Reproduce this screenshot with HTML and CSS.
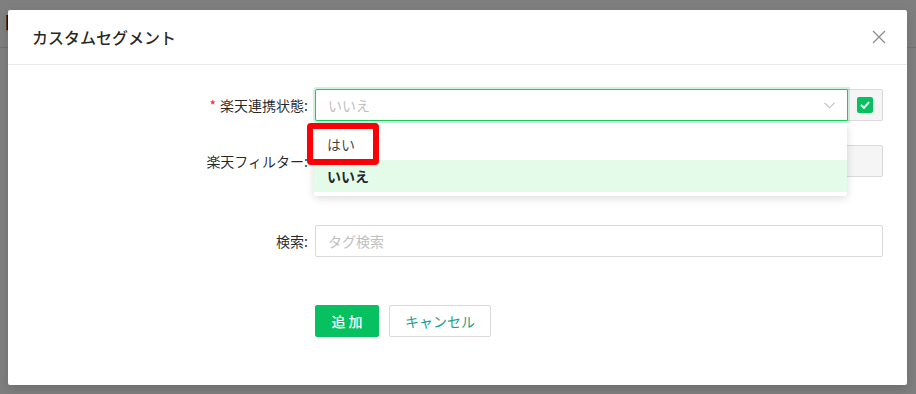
FILE: index.html
```html
<!DOCTYPE html>
<html lang="ja">

<head>
    <meta charset="UTF-8">
    <meta name="viewport" content="width=device-width, initial-scale=1.0">
    <title>カスタムセグメント</title>
    <link rel="stylesheet" href="styles.css">
</head>

<body>
    <div class="page">
        <div class="page-head">
            <span class="page-title">ト</span>
        </div>
    </div>

    <div class="mask">
        <div class="modal">
            <div class="modal-header">
                <div class="modal-title">カスタムセグメント</div>
                <button class="modal-close" type="button">
                    <svg width="14" height="14" viewBox="0 0 14 14">
                        <path d="M1 1 L13 13 M13 1 L1 13" stroke="#8c8c8c" stroke-width="1.3" fill="none" />
                    </svg>
                </button>
            </div>
            <div class="modal-body">
                <form class="form">
                    <div class="form-row">
                        <label class="form-label"><span class="required">*</span>楽天連携状態:</label>
                        <div class="form-control">
                            <div class="select-group">
                                <div class="select is-open">
                                    <span class="select-placeholder">いいえ</span>
                                    <svg class="select-arrow" width="11" height="7" viewBox="0 0 11 7">
                                        <path d="M0.5 0.8 L5.5 5.8 L10.5 0.8" stroke="#bfbfbf" stroke-width="1.1" fill="none" />
                                    </svg>
                                    <ul class="select-menu">
                                        <li>はい</li>
                                        <li class="active">いいえ</li>
                                    </ul>
                                    <div class="hint-box"></div>
                                </div>
                                <div class="addon">
                                    <span class="checkbox">
                                        <svg width="10" height="8" viewBox="0 0 10 8">
                                            <path d="M1 4 L4 6.8 L9 1.2" stroke="#fff" stroke-width="2" fill="none" />
                                        </svg>
                                    </span>
                                </div>
                            </div>
                        </div>
                    </div>

                    <div class="form-row row-wide">
                        <label class="form-label">楽天フィルター:</label>
                        <div class="form-control">
                            <div class="input disabled"></div>
                        </div>
                    </div>

                    <div class="form-row row-wide">
                        <label class="form-label">検索:</label>
                        <div class="form-control">
                            <input class="input" type="text" placeholder="タグ検索">
                        </div>
                    </div>

                    <div class="form-row">
                        <div class="form-label"></div>
                        <div class="form-control buttons">
                            <button class="btn btn-primary" type="button">追 加</button>
                            <button class="btn" type="button">キャンセル</button>
                        </div>
                    </div>
                </form>
            </div>
        </div>
    </div>
</body>

</html>
```

FILE: styles.css
```css
* {
    margin: 0;
    padding: 0;
    box-sizing: border-box;
}

body {
    width: 916px;
    height: 394px;
    overflow: hidden;
    background-color: #fff;
    font-family: "Noto Sans CJK JP", "Noto Sans", sans-serif;
    font-size: 14px;
    color: rgba(0, 0, 0, 0.85);
}

/* page behind the dialog */
.page {
    height: 100%;
}

.page-head {
    height: 48px;
    padding-top: 8px;
    border-bottom: 1px solid #e0e0e0;
}

.page-title {
    font-size: 19px;
    color: #222;
}

.mask {
    position: absolute;
    top: 0;
    left: 0;
    width: 100%;
    height: 100%;
    background-color: rgba(0, 0, 0, 0.5);
}

.modal {
    width: 899px;
    height: 375px;
    margin: 10px 0 0 8px;
    background-color: #fff;
    border-radius: 2px;
    box-shadow: 0 4px 12px rgba(0, 0, 0, 0.15);
}

.modal-header {
    display: flex;
    align-items: center;
    justify-content: space-between;
    padding: 16px 24px;
    border-bottom: 1px solid #e8e8e8;
}

.modal-title {
    font-size: 16px;
    font-weight: 500;
    line-height: 22px;
    color: rgba(0, 0, 0, 0.85);
}

.modal-close {
    display: flex;
    width: 14px;
    height: 14px;
    margin-right: -3px;
    border: none;
    background: none;
    cursor: pointer;
}

.modal-body {
    padding: 24px;
}

.form-row {
    display: flex;
    margin-bottom: 24px;
}

.row-wide {
    margin-bottom: 48px;
}

.form-label {
    width: 283px;
    flex-shrink: 0;
    padding-right: 7px;
    text-align: right;
    line-height: 32px;
    white-space: nowrap;
    color: rgba(0, 0, 0, 0.85);
}

.required {
    margin-right: 4px;
    color: #f5222d;
    font-size: 14px;
}

.form-control {
    flex: 1;
}

/* select with checkbox addon */
.select-group {
    display: flex;
    height: 32px;
}

.select {
    position: relative;
    flex: 1;
    display: flex;
    align-items: center;
    justify-content: space-between;
    padding: 0 11px 0 12px;
    border: 1px solid #d9d9d9;
    border-radius: 2px 0 0 2px;
    background-color: #fff;
}

.select.is-open {
    border-color: #22c864;
    box-shadow: 0 0 0 2px rgba(7, 193, 96, 0.2);
    z-index: 2;
}

.select-placeholder {
    color: #bfbfbf;
}

.select-arrow {
    margin-right: 1px;
}

.select-menu {
    position: absolute;
    top: calc(100% + 4px);
    left: -2px;
    right: 0;
    padding: 4px 0;
    list-style: none;
    background-color: #fff;
    border-radius: 2px;
    box-shadow: 0 2px 8px rgba(0, 0, 0, 0.15);
}

.select-menu li {
    height: 32px;
    padding: 0 13px;
    line-height: 32px;
    color: rgba(0, 0, 0, 0.75);
}

.select-menu li.active {
    background-color: #e5fbea;
    font-weight: 700;
    color: rgba(0, 0, 0, 0.85);
}

.hint-box {
    position: absolute;
    top: 33px;
    left: -9px;
    width: 72px;
    height: 42px;
    border: 6px solid #fb0007;
    border-radius: 4px;
}

.addon {
    display: flex;
    align-items: center;
    justify-content: center;
    width: 35px;
    border: 1px solid #d9d9d9;
    border-left: none;
    border-radius: 0 2px 2px 0;
    background-color: #f5f5f5;
}

.checkbox {
    display: flex;
    align-items: center;
    justify-content: center;
    width: 16px;
    height: 16px;
    border-radius: 2px;
    background-color: #07c160;
}

.input {
    display: block;
    width: 100%;
    height: 32px;
    padding: 0 12px;
    border: 1px solid #d9d9d9;
    border-radius: 2px;
    font-family: inherit;
    font-size: 14px;
    color: rgba(0, 0, 0, 0.85);
    background-color: #fff;
    outline: none;
}

.input::placeholder {
    color: #bfbfbf;
}

.input.disabled {
    background-color: #f5f5f5;
}

.buttons {
    display: flex;
    gap: 10px;
}

.btn {
    height: 32px;
    padding: 0 15px;
    border: 1px solid #d9d9d9;
    border-radius: 2px;
    background-color: #fff;
    font-family: inherit;
    font-size: 14px;
    color: #1a9f8c;
    cursor: pointer;
}

.btn-primary {
    width: 64px;
    padding: 0;
    border-color: #07c160;
    background-color: #07c160;
    color: #fff;
    font-weight: 500;
}
```
